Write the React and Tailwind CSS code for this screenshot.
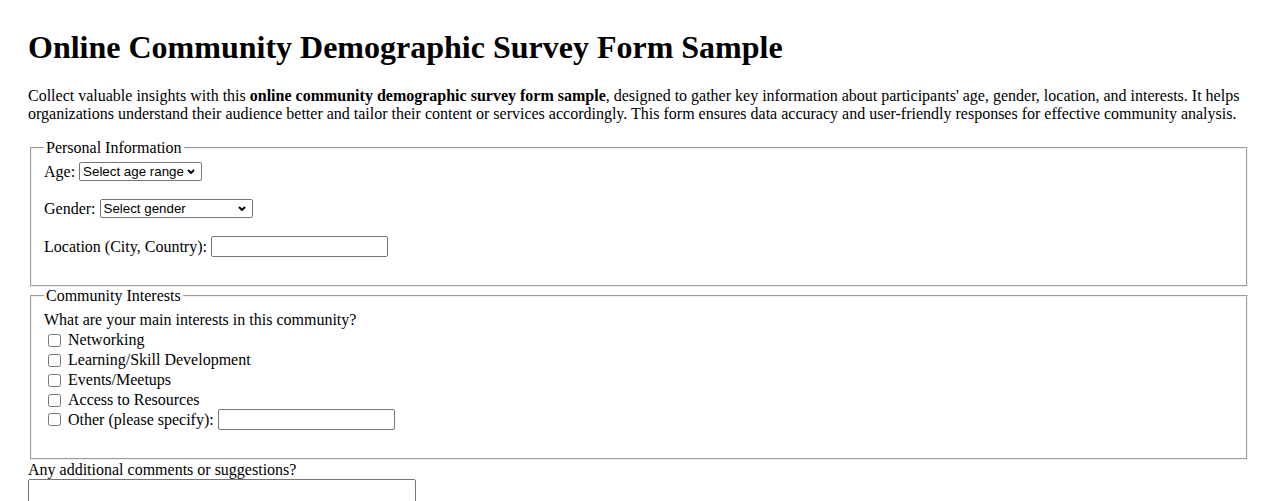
import React from 'react';

const Chevron = () => (
  <svg width="8" height="5" viewBox="0 0 8 5" className="shrink-0">
    <path d="M1 1 L4 4 L7 1" fill="none" stroke="#000" strokeWidth="1.9" />
  </svg>
);

const FakeSelect = ({ label, width }) => (
  <div
    className={`inline-flex items-center justify-between h-[19px] border border-[#767676] rounded-[2px] pl-[3px] pr-[6px] bg-white font-['Liberation_Sans',Arial,sans-serif] text-[13.333px] leading-[15px] ${width}`}
  >
    <span>{label}</span>
    <Chevron />
  </div>
);

const TextBox = ({ width }) => (
  <input
    type="text"
    className={`h-[21px] border border-[#767676] rounded-[2px] bg-white px-[2px] font-['Liberation_Sans',Arial,sans-serif] text-[13.333px] ${width}`}
  />
);

const Check = ({ children }) => (
  <div className="flex items-center h-[20px]">
    <input type="checkbox" className="w-[13px] h-[13px] ml-[4px] mr-[7px] shrink-0" />
    {children}
  </div>
);

export default function App() {
  return (
    <div className="min-h-screen bg-white text-black font-['Liberation_Serif','Times_New_Roman',serif] text-[16px] leading-[18px] px-[28px] pt-[29px]">
      <h1 className="text-[32px] font-bold leading-[37px] mb-[21px]">
        Online Community Demographic Survey Form Sample
      </h1>
      <p className="mb-[16px]">
        Collect valuable insights with this <b>online community demographic survey form sample</b>, designed to gather
        key information about participants' age, gender, location, and interests. It helps organizations understand
        their audience better and tailor their content or services accordingly. This form ensures data accuracy and
        user-friendly responses for effective community analysis.
      </p>

      <fieldset className="mx-[2px] border-2 [border-style:groove] border-[#f0f0f0] px-[12px] pt-[4px] pb-[10px]">
        <legend className="px-[2px] leading-[18px]">Personal Information</legend>
        <div className="flex items-center gap-[4px] h-[21px] mb-[16px]">
          <span>Age:</span>
          <FakeSelect label="Select age range" width="w-[123px]" />
        </div>
        <div className="flex items-center gap-[4px] h-[21px] mb-[17px]">
          <span>Gender:</span>
          <FakeSelect label="Select gender" width="w-[153px]" />
        </div>
        <div className="flex items-center gap-[4px] h-[21px] mb-[18px]">
          <span>Location (City, Country):</span>
          <TextBox width="w-[177px]" />
        </div>
      </fieldset>

      <fieldset className="mx-[2px] border-2 [border-style:groove] border-[#f0f0f0] px-[12px] pt-[6px] pb-[10px]">
        <legend className="px-[2px] leading-[18px]">Community Interests</legend>
        <div className="h-[19px]">What are your main interests in this community?</div>
        <Check>Networking</Check>
        <Check>Learning/Skill Development</Check>
        <Check>Events/Meetups</Check>
        <Check>Access to Resources</Check>
        <div className="flex items-center h-[21px] mb-[18px] -mt-[1px]">
          <input type="checkbox" className="w-[13px] h-[13px] ml-[4px] mr-[7px] shrink-0" />
          <span className="mr-[4px]">Other (please specify):</span>
          <TextBox width="w-[177px]" />
        </div>
      </fieldset>

      <div className="mt-[1px] h-[18px]">Any additional comments or suggestions?</div>
      <textarea className="block w-[388px] h-[40px] border border-[#767676] rounded-[2px] bg-white resize-none" />
    </div>
  );
}
